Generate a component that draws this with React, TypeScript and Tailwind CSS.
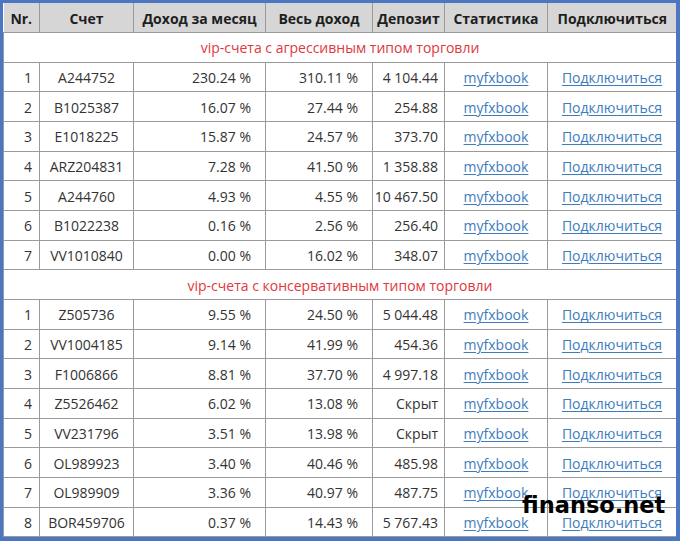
import React from "react";

type Row = [string, string, string, string];

const aggressive: Row[] = [
  ["A244752", "230.24 %", "310.11 %", "4 104.44"],
  ["B1025387", "16.07 %", "27.44 %", "254.88"],
  ["E1018225", "15.87 %", "24.57 %", "373.70"],
  ["ARZ204831", "7.28 %", "41.50 %", "1 358.88"],
  ["A244760", "4.93 %", "4.55 %", "10 467.50"],
  ["B1022238", "0.16 %", "2.56 %", "256.40"],
  ["VV1010840", "0.00 %", "16.02 %", "348.07"],
];

const conservative: Row[] = [
  ["Z505736", "9.55 %", "24.50 %", "5 044.48"],
  ["VV1004185", "9.14 %", "41.99 %", "454.36"],
  ["F1006866", "8.81 %", "37.70 %", "4 997.18"],
  ["Z5526462", "6.02 %", "13.08 %", "Скрыт"],
  ["VV231796", "3.51 %", "13.98 %", "Скрыт"],
  ["OL989923", "3.40 %", "40.46 %", "485.98"],
  ["OL989909", "3.36 %", "40.97 %", "487.75"],
  ["BOR459706", "0.37 %", "14.43 %", "5 767.43"],
];

const td = "border border-[#9a9a9a] h-[29.67px] p-0 pt-[2px]";

function DataRows({ rows }: { rows: Row[] }) {
  return (
    <>
      {rows.map((r, i) => (
        <tr key={r[0]}>
          <td className={`${td} text-right pr-[7px]`}>{i + 1}</td>
          <td className={`${td} text-center`}>{r[0]}</td>
          <td className={`${td} text-right pr-[14px]`}>{r[1]}</td>
          <td className={`${td} text-right pr-[14px]`}>{r[2]}</td>
          <td className={`${td} text-right pr-[6px]`}>{r[3]}</td>
          <td className={`${td} text-center`}>
            <a className="text-[#3d7cbd] underline underline-offset-2 decoration-1">myfxbook</a>
          </td>
          <td className={`${td} text-center`}>
            <a className="text-[#3d7cbd] underline underline-offset-2 decoration-1">Подключиться</a>
          </td>
        </tr>
      ))}
    </>
  );
}

function Section({ title }: { title: string }) {
  return (
    <tr>
      <td colSpan={7} className={`${td} text-center text-[#e0383c]`}>
        {title}
      </td>
    </tr>
  );
}

export default function App() {
  return (
    <div
      className="relative w-[680px] h-[541px] overflow-hidden bg-white border-[3px] border-r-[4px] border-b-[4px] border-[#4a76c2]"
      style={{ fontFamily: '"Open Sans", "Noto Sans", sans-serif' }}
    >
      <table className="w-full table-fixed border-collapse text-[14px] leading-none text-[#333]">
        <colgroup>
          <col className="w-[36px]" />
          <col className="w-[94px]" />
          <col className="w-[132px]" />
          <col className="w-[107px]" />
          <col className="w-[72px]" />
          <col className="w-[103px]" />
          <col className="w-[129px]" />
        </colgroup>
        <thead>
          <tr className="bg-[#d6d6d6] text-[#1e1e1e]">
            <th className={`${td} border-t-0 border-l-0 text-center font-bold`}>Nr.</th>
            <th className={`${td} border-t-0 text-center font-bold`}>Счет</th>
            <th className={`${td} border-t-0 text-center font-bold`}>Доход за месяц</th>
            <th className={`${td} border-t-0 text-center font-bold`}>Весь доход</th>
            <th className={`${td} border-t-0 text-center font-bold`}>Депозит</th>
            <th className={`${td} border-t-0 text-center font-bold`}>Статистика</th>
            <th className={`${td} border-t-0 border-r-0 text-center font-bold`}>Подключиться</th>
          </tr>
        </thead>
        <tbody>
          <Section title="vip-счета с агрессивным типом торговли" />
          <DataRows rows={aggressive} />
          <Section title="vip-счета с консервативным типом торговли" />
          <DataRows rows={conservative} />
        </tbody>
      </table>
      <div
        className="absolute left-[519px] top-[491px] text-[22.5px] font-bold text-black leading-none"
        style={{ fontFamily: '"DejaVu Sans", sans-serif' }}
      >
        finanso.net
      </div>
    </div>
  );
}
